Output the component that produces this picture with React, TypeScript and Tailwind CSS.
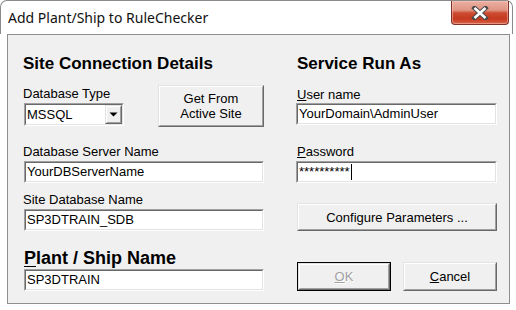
import React from "react";

function Sunken({ children, className = "" }: { children?: React.ReactNode; className?: string }) {
  return (
    <div className={`border border-t-[#a0a0a0] border-l-[#a0a0a0] border-r-white border-b-white ${className}`}>
      <div className="h-full border border-t-[#696969] border-l-[#696969] border-r-[#e3e3e3] border-b-[#e3e3e3] bg-white flex">
        {children}
      </div>
    </div>
  );
}

function TextBox({ value, className = "" }: { value: string; className?: string }) {
  return (
    <Sunken className={`h-[22px] ${className}`}>
      <div className="pl-px text-[13px] leading-[18px] text-black whitespace-nowrap">{value}</div>
    </Sunken>
  );
}

function Raised({ children, className = "" }: { children?: React.ReactNode; className?: string }) {
  return (
    <div className={`border border-t-[#e3e3e3] border-l-[#e3e3e3] border-r-[#696969] border-b-[#696969] ${className}`}>
      <div className="h-full border border-t-white border-l-white border-r-[#a0a0a0] border-b-[#a0a0a0] bg-[#f0f0f0] flex items-center justify-center text-[13px] leading-[15px] text-black text-center">
        {children}
      </div>
    </div>
  );
}

function Label({ children, className = "" }: { children: React.ReactNode; className?: string }) {
  return <div className={`text-[13px] leading-[15px] text-black whitespace-nowrap ${className}`}>{children}</div>;
}

export default function App() {
  return (
    <div className="w-[516px] h-[310px] bg-white overflow-hidden font-['Liberation_Sans',Arial,sans-serif] text-black">
      {/* Title bar */}
      <div className="w-[513px] h-[34px] border-t border-l border-r border-[#8a8a8a] rounded-t-[7px] flex items-start">
        <div className="pl-[7px] pt-[7px] text-[14px] leading-[20px] font-['Noto_Sans',sans-serif] text-[#111] whitespace-nowrap">
          Add Plant/Ship to RuleChecker
        </div>
        <div className="ml-auto mr-[3px] w-[58px] h-[24px] rounded-b-[4px] border border-t-0 border-[#7a3326] bg-[linear-gradient(to_bottom,#eab0a2_0%,#e09481_40%,#cc4b31_52%,#c5391f_78%,#d9654a_100%)] flex items-center justify-center shadow-[inset_0_0_0_1px_rgba(255,210,200,0.45)]">
          <svg width="18" height="14" viewBox="0 0 18 14">
            <path d="M3.5 2 L14.5 12 M14.5 2 L3.5 12" stroke="#4b4b4b" strokeWidth="4.6" strokeLinecap="square" fill="none" />
            <path d="M3.5 2 L14.5 12 M14.5 2 L3.5 12" stroke="#ffffff" strokeWidth="2.6" strokeLinecap="butt" fill="none" />
          </svg>
        </div>
      </div>

      {/* Client panel */}
      <div className="ml-[7px] w-[503px] h-[270px] border border-[#8e8e8e] bg-[#f0f0f0] flex pl-[16px]">
        {/* Left column */}
        <div className="w-[240px] flex flex-col">
          <div className="mt-[19px] -ml-px text-[17px] leading-[20px] font-bold whitespace-nowrap">Site Connection Details</div>
          <div className="mt-[11px] flex items-start">
            <div className="flex flex-col">
              <Label className="mt-px -ml-px">Database Type</Label>
              <Sunken className="mt-[2px] w-[100px] h-[23px]">
                <div className="flex-1 pl-px text-[13px] leading-[19px]">MSSQL</div>
                <Raised className="w-[17px] h-full">
                  <svg width="9" height="5" viewBox="0 0 9 5">
                    <path d="M0.5 0.5 L8.5 0.5 L4.5 4.5 Z" fill="#000" />
                  </svg>
                </Raised>
              </Sunken>
            </div>
            <Raised className="ml-[34px] w-[106px] h-[42px]">
              Get From
              <br />
              Active Site
            </Raised>
          </div>
          <Label className="mt-[17px] -ml-px">Database Server Name</Label>
          <TextBox className="mt-[2px] w-[240px]" value="YourDBServerName" />
          <Label className="mt-[9px] -ml-px">Site Database Name</Label>
          <TextBox className="mt-[2px] w-[240px]" value="SP3DTRAIN_SDB" />
          <div className="mt-[17px] text-[18px] leading-[21px] font-bold whitespace-nowrap">
            <span className="underline underline-offset-2">P</span>lant / Ship Name
          </div>
          <TextBox className="w-[240px]" value="SP3DTRAIN" />
        </div>

        {/* Right column */}
        <div className="ml-[32px] w-[201px] flex flex-col">
          <div className="mt-[19px] pl-px text-[17px] leading-[20px] font-bold whitespace-nowrap">Service Run As</div>
          <Label className="mt-[13px] pl-px">
            <span className="underline">U</span>ser name
          </Label>
          <TextBox className="mt-px w-[201px]" value="YourDomain\AdminUser" />
          <Label className="mt-[19px] pl-px">
            <span className="underline">P</span>assword
          </Label>
          <Sunken className="mt-[2px] w-[201px] h-[22px]">
            <div className="pl-px text-[13px] leading-[18px] whitespace-nowrap">**********</div>
            <div className="ml-px mt-px w-px h-[16px] bg-black" />
          </Sunken>
          <Raised className="mt-[20px] ml-px w-[200px] h-[28px]">Configure Parameters ...</Raised>
          <div className="mt-[31px] ml-px flex gap-[12px]">
            <div className="w-[94px] h-[29px] border border-black">
              <Raised className="w-full h-full">
                <span className="text-[#a0a0a0] [text-shadow:1px_1px_0_#ffffff]">
                  <span className="underline">O</span>K
                </span>
              </Raised>
            </div>
            <Raised className="w-[94px] h-[29px]">
              <span>
                <span className="underline">C</span>ancel
              </span>
            </Raised>
          </div>
        </div>
      </div>
    </div>
  );
}
